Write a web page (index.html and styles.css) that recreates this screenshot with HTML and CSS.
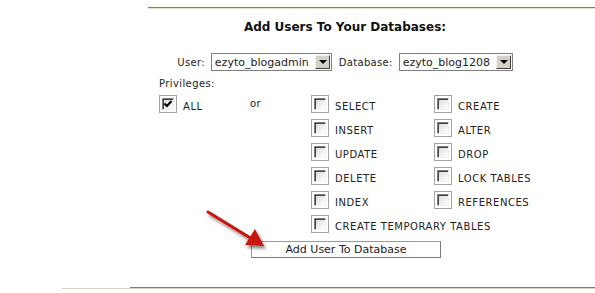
FILE: index.html
```html
<!DOCTYPE html>
<html lang="en">
<head>
    <meta charset="UTF-8">
    <title>Add Users To Your Databases</title>
    <link rel="stylesheet" href="styles.css">
</head>
<body>
    <!-- Top rule -->
    <div class="top-rule"></div>

    <div class="form">
        <h2 class="title">Add Users To Your Databases:</h2>

        <!-- User / database pickers -->
        <div class="pickers">
            <span class="lbl">User:</span>
            <div class="select user"><span class="val">ezyto_blogadmin</span><i class="arrow"></i></div>
            <span class="lbl lbl-db">Database:</span>
            <div class="select db"><span class="val">ezyto_blog1208</span><i class="arrow"></i></div>
        </div>

        <div class="priv-title">Privileges:</div>

        <!-- Privilege checkboxes -->
        <div class="privs">
            <label class="opt c1"><span class="box"><span class="inner"><svg viewBox="0 0 10 10" width="10" height="10"><path d="M1.5 4.5 L4 7 L8.5 2" fill="none" stroke="#000" stroke-width="2"/></svg></span></span><span class="t">ALL</span></label>
            <span class="or">or</span>
            <label class="opt c3"><span class="box"><span class="inner"></span></span><span class="t">SELECT</span></label>
            <label class="opt c4"><span class="box"><span class="inner"></span></span><span class="t">CREATE</span></label>
            <label class="opt c3"><span class="box"><span class="inner"></span></span><span class="t">INSERT</span></label>
            <label class="opt c4"><span class="box"><span class="inner"></span></span><span class="t">ALTER</span></label>
            <label class="opt c3"><span class="box"><span class="inner"></span></span><span class="t">UPDATE</span></label>
            <label class="opt c4"><span class="box"><span class="inner"></span></span><span class="t">DROP</span></label>
            <label class="opt c3"><span class="box"><span class="inner"></span></span><span class="t">DELETE</span></label>
            <label class="opt c4"><span class="box"><span class="inner"></span></span><span class="t">LOCK TABLES</span></label>
            <label class="opt c3"><span class="box"><span class="inner"></span></span><span class="t">INDEX</span></label>
            <label class="opt c4"><span class="box"><span class="inner"></span></span><span class="t">REFERENCES</span></label>
            <label class="opt c3 wide"><span class="box"><span class="inner"></span></span><span class="t">CREATE TEMPORARY TABLES</span></label>
        </div>

        <div class="actions">
            <button class="btn">Add User To Database</button>
        </div>
    </div>

    <!-- Bottom rule -->
    <div class="bottom-rule"></div>
    <div class="bottom-rule-light"></div>

    <!-- Red pointer arrow -->
    <svg class="pointer" width="80" height="52" viewBox="0 0 80 52">
        <defs>
            <filter id="shadow" x="-20%" y="-20%" width="150%" height="150%">
                <feGaussianBlur in="SourceAlpha" stdDeviation="1.5"/>
                <feOffset dx="2" dy="3" result="blur"/>
                <feComponentTransfer><feFuncA type="linear" slope="0.45"/></feComponentTransfer>
                <feMerge><feMergeNode/><feMergeNode in="SourceGraphic"/></feMerge>
            </filter>
        </defs>
        <g filter="url(#shadow)">
            <line x1="8" y1="7" x2="52" y2="34" stroke="#c8120f" stroke-width="3" stroke-linecap="round"/>
            <polygon points="64,41 45,40 55,24" fill="#c8120f"/>
        </g>
    </svg>
</body>
</html>
```

FILE: styles.css
```css
/* Page */
body {
    margin: 0;
    padding-top: 7px;
    font-family: "DejaVu Sans", Verdana, sans-serif;
    color: #222;
    background: #fff;
}

/* Rules */
.top-rule {
    margin-left: 148px;
    height: 1px;
    background: #7c7c7c;
    border-bottom: 1px solid #e4e1d4;
}

.bottom-rule {
    margin-top: 29px;
    margin-left: 130px;
    height: 1px;
    background: #7c7c7c;
}

.bottom-rule-light {
    margin-left: 62px;
    height: 1px;
    background: #d9d5c5;
}

/* Form block */
.form {
    margin-left: 159px;
    width: 372px;
}

.title {
    margin: 10px 0 0;
    font-size: 12px;
    line-height: 16px;
    font-weight: bold;
    text-align: center;
    color: #111;
}

/* Pickers */
.pickers {
    display: flex;
    justify-content: center;
    align-items: center;
    margin-top: 18px;
}

.lbl {
    font-size: 10px;
    letter-spacing: 0.3px;
    margin-right: 6px;
}

.lbl-db {
    margin-left: 7px;
}

.select {
    display: flex;
    align-items: center;
    box-sizing: border-box;
    height: 18px;
    border: 1px solid #7f7f7f;
    padding-left: 3px;
    font-size: 11px;
    background: #fff;
}

.select.user {
    width: 121px;
}

.select.db {
    width: 114px;
}

.select .val {
    flex: 1;
    white-space: nowrap;
    overflow: hidden;
}

.arrow {
    position: relative;
    box-sizing: border-box;
    width: 15px;
    height: 14px;
    margin-right: 1px;
    background: #d4d0c8;
    border: 1px solid;
    border-color: #f4f2ee #404040 #404040 #f4f2ee;
}

.arrow::after {
    content: "";
    position: absolute;
    left: 3px;
    top: 4px;
    border-left: 4px solid transparent;
    border-right: 4px solid transparent;
    border-top: 4px solid #000;
}

/* Privileges */
.priv-title {
    margin-top: 7px;
    font-size: 10px;
    line-height: 12px;
    letter-spacing: 0.4px;
}

.privs {
    display: grid;
    grid-template-columns: 91px 61px 123px 1fr;
    grid-auto-rows: 18px;
    row-gap: 6px;
    margin-top: 5px;
}

.opt {
    display: flex;
    align-items: center;
    gap: 6px;
    font-size: 10px;
    letter-spacing: 0.55px;
    white-space: nowrap;
}

.opt .t {
    padding-top: 4px;
}

.c1 { grid-column: 1; }
.c3 { grid-column: 3; }
.c4 { grid-column: 4; }
.wide { grid-column: 3 / span 2; }

.or {
    grid-column: 2;
    font-size: 10px;
    letter-spacing: 0.4px;
    padding-top: 3px;
}

.box {
    display: flex;
    align-items: center;
    justify-content: center;
    box-sizing: border-box;
    width: 18px;
    height: 18px;
    border: 1px solid #a3a3a3;
    background: #fff;
    flex-shrink: 0;
}

.inner {
    display: flex;
    align-items: center;
    justify-content: center;
    box-sizing: border-box;
    width: 12px;
    height: 12px;
    border: 1px solid;
    border-color: #808080 #f0f0f0 #f0f0f0 #808080;
    box-shadow: inset 1px 1px #404040;
    background: linear-gradient(135deg, #dcdcd6, #fff);
}

/* Submit */
.actions {
    display: flex;
    justify-content: center;
    margin-top: 8px;
    padding-left: 2px;
}

.btn {
    box-sizing: border-box;
    width: 190px;
    height: 17px;
    padding: 0;
    font-family: inherit;
    font-size: 11px;
    color: #222;
    background: #fff;
    border: 1px solid #9a9a9a;
    border-right-color: #7a7a7a;
    border-bottom-color: #7a7a7a;
}

/* Overlay arrow */
.pointer {
    position: absolute;
    left: 200px;
    top: 205px;
}
```
